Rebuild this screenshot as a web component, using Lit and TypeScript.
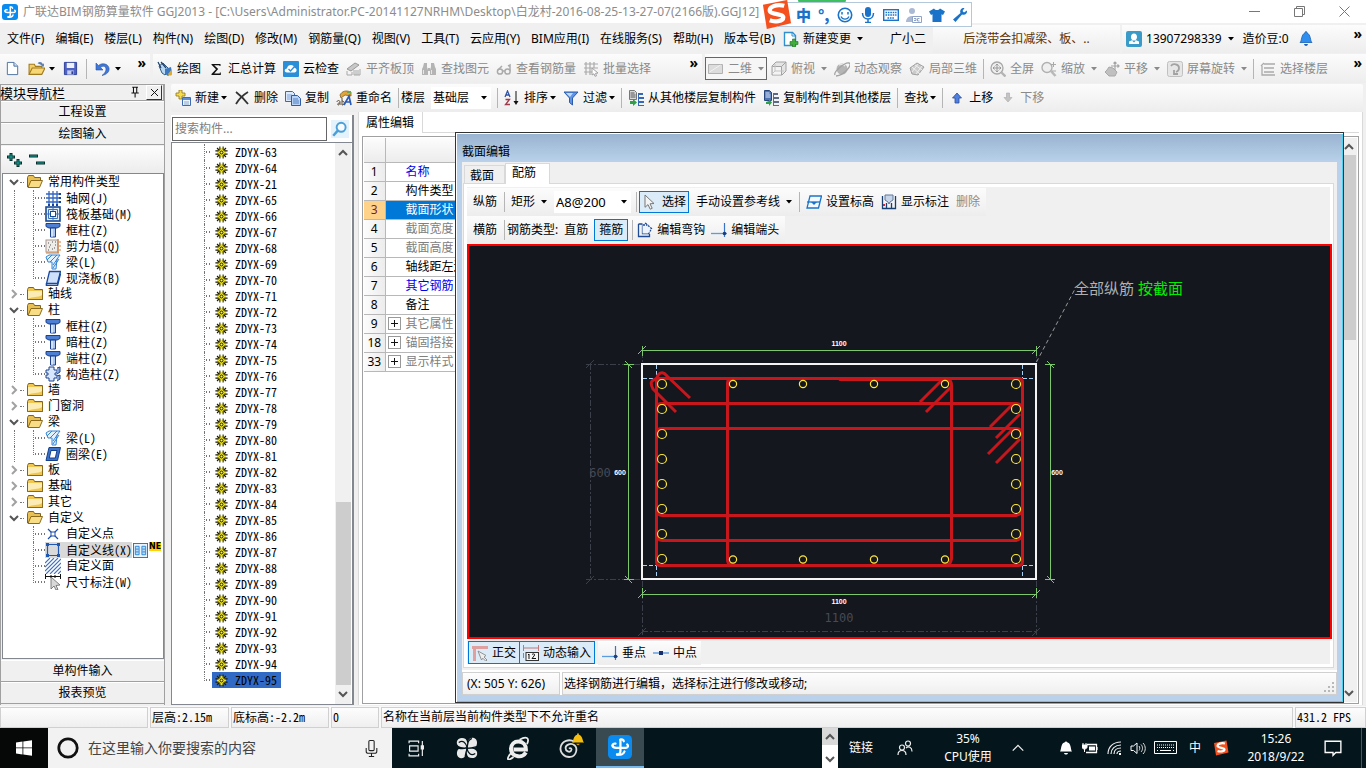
import { LitElement, html, svg, css, nothing } from "lit";
import { customElement } from "lit/decorators.js";
import { classMap } from "lit/directives/class-map.js";

/* ---------- icon set (16 x 16 grid) ---------- */
const icons: Record<string, unknown> = {
  app: svg`<rect width="16" height="16" rx="3" fill="#0a8bf0"/><g fill="none" stroke="#fff" stroke-width="1.500" stroke-linecap="round"><path d="M8.300 3v7.500c0 2-1 2.500-2.300 2.500"/><path d="M8.300 3.200c1.200-.6 2.200 0 2.200 1"/><path d="M3 7c0 1.500 1.500 1.500 2.500 1.500h6.500c1.500 0 1.700-1.500.8-2.200"/><path d="M3 7c0-1 1-1.500 2-1.200"/><path d="M6 13c2.500.5 4.500-.5 5-2"/></g>`,
  fresh: svg`<path d="M2.500 1.500h7l4 4v9h-11z" fill="#fdfeff" stroke="#4a6ea0"/><path d="M9.500 1.500v4h4" fill="#cfdff2" stroke="#4a6ea0"/>`,
  open: svg`<path d="M1 13V4h5l1 2h6v2" fill="#f3cf6a" stroke="#a17a1c"/><path d="M1 13.500l3-6h12l-3 6z" fill="#f7d774" stroke="#a17a1c"/><path d="M9 3c2-2 4-1 5 1l1-1v3h-3l1-1" fill="#5a7fb0"/>`,
  save: svg`<path d="M1.500 1.500h13v13h-13z" fill="#4d62c4" stroke="#2c3d96"/><path d="M4 2h8v5.500H4z" fill="#eef1fb"/><path d="M4.500 10h7v4.500h-7z" fill="#c5cdee"/><path d="M9 11h2v3H9z" fill="#2c3d96"/>`,
  undo: svg`<path d="M1 2v7h7L5.600 6.600C8 4 12 5.500 10.800 9.500 10.300 11.400 9 13 7 14.500c5-1 7.700-4 7-7.500C13 2.500 7 1.500 3.500 4.500z" fill="#3f78d8" stroke="#2552a4" stroke-width=".6"/>`,
  paint: svg`<path d="M2 5l4-3 7 7-5 5-3-2z" fill="#b7d7f2" stroke="#35597f"/><path d="M1 1l3 6M4 1l5 6" stroke="#1e3f6b" stroke-width="1.200"/><path d="M8 8l6-2 1 6-4 3-3-2z" fill="#3b78c2"/><path d="M11 13l4-5v5c0 2-3 2-4 0z" fill="#dfa92b"/>`,
  sigma: svg`<path d="M12.500 5V3H3.500v.8L8 8.200 3.500 13v1h9.300v-2.500h-1v1H6.200l4-4.500-4-3.800h5.300v.8z" fill="#111"/>`,
  cloud: svg`<rect width="16" height="16" rx="1" fill="#2b8fd8"/><path d="M4 11.500c-3 0-3-4 0-4C4.500 3 11 3 11.500 7c3 .3 2.500 4.500 0 4.500z" fill="#fff"/><path d="M5.500 8l2 2 4-4.500" fill="none" stroke="#2b8fd8" stroke-width="1.300"/>`,
  slab: svg`<path d="M1 8l8-6 4 2-8 6z" fill="#c8c8c8" stroke="#999"/><path d="M1 10v4h5v-3M8 9v5h6V8M10 9v5M12 9v5" fill="none" stroke="#a8a8a8"/>`,
  bino: svg`<path d="M2 6l1-4h3v4zM10 6V2h3l1 4zM1 14V8l1-2h4l1 3v5zM9 14V9l1-3h4l1 2v6zM7 7h2v3H7z" fill="#b4b4b4"/><path d="M2.500 9v4M10.500 9v4" stroke="#e6e6e6"/>`,
  glasses: svg`<g fill="none" stroke="#aaa" stroke-width="1.500"><circle cx="4" cy="10.500" r="2.600"/><circle cx="11.500" cy="10.500" r="2.600"/><path d="M6.500 10h2.400M2 9l4-4M14 10V4l-2 1"/></g>`,
  batch: svg`<path d="M1 3h14M1 7h14M1 11h8M3 1v13M7 1v13M11 1v6" stroke="#aaa" fill="none" stroke-width="1.200"/><path d="M9 7l6 5-2.500.3 1 2.500-1.500.5-1-2.500L9 14z" fill="#fff" stroke="#a0a0a0"/>`,
  plane: svg`<path d="M.5 3.500h14v9H.5z" fill="#dcdcdc" stroke="#b2b2b2"/><path d="M1.500 11l11-7" stroke="#f2f2f2"/>`,
  cube: svg`<path d="M1 5l4-4h10v9l-4 4H1z" fill="#e4e4e4" stroke="#a2a2a2"/><path d="M1.500 5.500h9V14M10.500 5.500L15 1" fill="none" stroke="#a2a2a2"/><path d="M2 6h8v7.500H2z" fill="#f4f4f4"/><path d="M4 3v7h9M4 10l-3 3" stroke="#c4c4c4" fill="none"/>`,
  orbit: svg`<circle cx="8" cy="8" r="5.500" fill="#b5b5b5"/><path d="M5 4c2-1 4-1 6 1" stroke="#e5e5e5" fill="none" stroke-width="1.500"/><path d="M1 14C-1 11 11 1 15 2s-4 12-13 13" fill="none" stroke="#a3a3a3" stroke-width="1.300"/>`,
  part3d: svg`<path d="M1 7l7-5 7 4-6 8-6-1z" fill="#cbcbcb" stroke="#a0a0a0"/><path d="M3 6l8 7M6 4l7 5M3 11l6-8M7 13l6-8" stroke="#efefef"/>`,
  full: svg`<circle cx="7" cy="7" r="6" fill="#efefef" stroke="#a8a8a8" stroke-width="1.300"/><path d="M7 3v8M3 7h8M5.500 4.500L7 3l1.500 1.500M5.500 9.500L7 11l1.500-1.500M4.500 5.500L3 7l1.500 1.500M9.500 5.500L11 7 9.500 8.500" fill="none" stroke="#999"/><path d="M11.500 11.500l4 4" stroke="#b4b4b4" stroke-width="2.400"/>`,
  zoom: svg`<circle cx="6" cy="6.500" r="5" fill="#efefef" stroke="#b0b0b0" stroke-width="1.400"/><path d="M10 10l4.500 5" stroke="#b9b9b9" stroke-width="2.600"/><path d="M12.500 1v5M10 3.500h5M11 10h4" stroke="#aaa"/>`,
  pan: svg`<path d="M3 9l2-3 4 1 4 4-2 4H5L1 11z" fill="#c0c0c0" stroke="#a8a8a8"/><path d="M11 1v8M7 5h8M9.500 2.500L11 1l1.500 1.500M13.500 3.500L15 5l-1.500 1.500" fill="none" stroke="#a4a4a4" stroke-width="1.200"/>`,
  rotate: svg`<rect x=".5" y=".5" width="15" height="15" rx="2" fill="#e6e6e6" stroke="#c0c0c0"/><path d="M4 5c2-3 8-2 8 2 0 3-3 4-3 4M7 9v4h4" fill="none" stroke="#a2a2a2" stroke-width="1.800"/>`,
  floor: svg`<path d="M4 3h11M4 7h10M4 11h10M4 14h11M1 5l3-3M2 5v9h2" stroke="#aaa" stroke-width="1.300" fill="none"/>`,
  create: svg`<path d="M4 0h3v3h3v3H7v3H4V6H1V3h3z" fill="#f7dc4a" stroke="#8f7410" stroke-width=".8"/><path d="M7.500 7.500h8v8h-8z" fill="#eef5fd" stroke="#3e6cb0"/><path d="M8 8h7v2H8z" fill="#5d8fd8"/><path d="M9 12h5M9 14h5" stroke="#8aa7cf"/>`,
  cross: svg`<path d="M2 2c4 3 8 7 12 12M14 2C9 5 5 9 2 14" stroke="#333" stroke-width="1.800" fill="none"/>`,
  copy: svg`<path d="M.5 1.500h7l2 2v8h-9z" fill="#dbe9fb" stroke="#3c69ae"/><path d="M2 5h5M2 7h5M2 9h5" stroke="#7ea3d8"/><path d="M6.500 5.500h6l3 3v7h-9z" fill="#b9d3f6" stroke="#2f5ca5"/><path d="M8 9h5M8 11h6M8 13h6" stroke="#4f7fc4"/>`,
  rename: svg`<path d="M4 5c2-4 6-5 11-3v4L9 5 5 8z" fill="#e0a63a" stroke="#80602a" stroke-width=".8"/><path d="M11 1h4v2h-4z" fill="#6aa84f"/><path d="M1 12c0-2 3-2 3 0v3M4 13c-3 0-3 2-1 2M6 8v7c3 0 3-4 0-4" fill="none" stroke="#5b4a34"/><path d="M8 15l5-9 2 9M10 12h4" fill="none" stroke="#2c5bb5" stroke-width="1.700"/>`,
  sort: svg`<path d="M1 7l2.500-6L6 7M2 5h3" fill="none" stroke="#3355a8" stroke-width="1.300"/><path d="M1.500 9.500h4l-4 5h4.500" fill="none" stroke="#a13a4a" stroke-width="1.300"/><path d="M12 1v11" stroke="#111"/><path d="M9.500 11h5L12 15z" fill="#111"/>`,
  filter: svg`<path d="M1 2h14L9.500 8v7l-3-2.500V8z" fill="#5f93e6" stroke="#2b5aa8"/><path d="M3 3h7L7 7z" fill="#c3daf8"/>`,
  floors: svg`<path d="M1.500.5h5l2 2v7h-7z" fill="#d9d9d9" stroke="#777"/><path d="M2.500 3h4M2.500 5h5M2.500 7h5" stroke="#555"/><path d="M10 3h5v2h-4v2h5v2h-5v2h5v2h-5v2h5v1h-6z" fill="#3568b8"/><path d="M2 11h3V9l4 3.500L5 16v-2H2z" fill="#2fa04a"/>`,
  floors2: svg`<path d="M1.500.5h5l2 2v8h-7z" fill="#4f74b4" stroke="#27467e"/><path d="M2.500 3h4M2.500 5h5M2.500 7h5" stroke="#dfe8f8"/><path d="M10 3h5v2h-4v2h5v2h-5v2h5v2h-5v2h5v1h-6z" fill="#5a6a88"/><path d="M3 12l3-1v-2l3 3.500L6 16v-2H3z" fill="#2fa04a"/>`,
  up: svg`<path d="M8 3l4.500 5H10v5H6V8H3.500z" fill="#4f80e0" stroke="#2a4c9c" stroke-width=".8"/>`,
  down: svg`<path d="M8 12l4-4.500H9.500V3h-3v4.500H4z" fill="#c4c4c4" stroke="#aaa" stroke-width=".6"/>`,
  change: svg`<path d="M1.500 1.500h8l3 3v10h-11z" fill="#fff" stroke="#2f8fd0" stroke-width="1.400"/><path d="M9 1.500V5h3.500" fill="none" stroke="#2f8fd0"/><path d="M9.500 8h3v2.500H15v3h-2.500V16h-3v-2.500H7v-3h2.500z" fill="#3fae3a" stroke="#23701f" stroke-width=".6"/>`,
  user: svg`<rect width="16" height="16" rx="2" fill="#3a9bc8"/><path d="M8 2.500c4 0 3.500 6 1.500 6.500l3.500 1.500V13H3v-2.500L6.500 9C4.500 8.500 4 2.500 8 2.500z" fill="#fff"/><path d="M6 9.500l2 2 2-2z" fill="#3a9bc8"/>`,
  bell: svg`<path d="M2 11.500c2-1.500 1-8 5-9.500 0-2 2-2 2 0 4 1.500 3 8 5 9.500z" fill="#2f8ff0" stroke="#1b5fb0" stroke-width=".8"/><path d="M6 13c.5 2.500 3.500 2.500 4 0z" fill="#1b5fb0"/>`,
  search: svg`<path d="M0 0h16v16H0z" fill="#e4f2fc"/><circle cx="9" cy="6.500" r="4" fill="#f6fbff" stroke="#4a9fd8" stroke-width="1.700"/><path d="M6 9.500L2 14" stroke="#4a9fd8" stroke-width="2.200"/>`,
  folder: svg`<path d="M.5 3.500l1-2h5l1 2h8v10H.5z" fill="#f0c650" stroke="#7f6420"/><path d="M1 5h14v4c-4 3-9 1-14 4z" fill="#fbebb4"/><path d="M.5 13.500h15v-9" fill="none" stroke="#8a6a1e"/>`,
  folderOpen: svg`<path d="M.5 13V3.500l1-2h5l1 2h6V7" fill="#e8bf52" stroke="#7f6420"/><path d="M1 13.500l3-7h11.500l-3 7z" fill="#f9dd85" stroke="#8a6a1e"/>`,
  axis: svg`<path d="M1 4h13M1 8h13M1 12h13M4 1v14M8 1v14M12 1v14" stroke="#3467c0" stroke-width="1.300"/><path d="M14 3h2v2h-2zM14 7h2v2h-2zM14 11h2v2h-2zM3 14h2v2H3zM7 14h2v2H7zM11 14h2v2h-2z" fill="#16429a"/>`,
  raft: svg`<rect x="1" y="1" width="14" height="14" fill="#e3eefb" stroke="#174a94" stroke-width="1.600"/><rect x="5.500" y="5.500" width="5" height="5" fill="#fff" stroke="#174a94"/><path d="M3.500 3.500h9v9h-9zM1 8h4M11 8h4M8 1v4M8 11v4" fill="none" stroke="#3f72b8"/>`,
  column: svg`<path d="M1 1.500h14v3l-3 1.500H4L1 4.500z" fill="#4d7fd2" stroke="#1d418c"/><path d="M5.500 6h5v9h-5z" fill="#a9c8f6" stroke="#1d418c"/><path d="M7 7v8" stroke="#fff"/>`,
  wall: svg`<rect x="1" y="2" width="12" height="12" fill="#efedea" stroke="#a89890"/><path d="M3 5h1M7 4h1M10 7h1M4 9h1M7 11h1M5 7h1M9 10h1M3 12h1M10 4h1" stroke="#555"/><path d="M13 1v14M14 4h2M14 8h2M14 12h2M1 15h13" stroke="#d07c3c" stroke-width="1.200"/>`,
  beam: svg`<path d="M1 3l3-2h11l-3 4-1 10H7V8L3 8z" fill="#e4f1fd" stroke="#3583d0"/><path d="M2 6l5-5M5 8l7-7M8 11l5-7M8 14l6-9" stroke="#3583d0"/>`,
  board: svg`<path d="M4.500 1.500h11l-3 12h-11z" fill="#cfe0fa" stroke="#174aa0" stroke-width="1.300"/><path d="M1.500 13.500v2h11l3-12" fill="none" stroke="#174aa0" stroke-width="1.500"/>`,
  ring: svg`<path d="M4 1.500h11.500l-3 13H1z" fill="#3c72c8" stroke="#15408c"/><path d="M6 4.500h6l-1.700 7.500H4.300z" fill="#fff" stroke="#15408c"/>`,
  struct: svg`<path d="M4 1h5v3h3v3h-2v2h2v3H9v3H4v-3H1V9h2V7H1V4h3z" fill="#d8e7fb" stroke="#1d4590"/><path d="M12 2l3-1v5l-3 2M12 10l3-1v4l-3 2" fill="#88a8dc" stroke="#1d4590"/>`,
  point: svg`<path d="M3 3l10 10M13 3L3 13" stroke="#1d4fae" stroke-width="1.200"/><path d="M6 6h4v4H6z" fill="#fff" stroke="#1d4fae"/>`,
  line: svg`<path d="M2.500 2.500h11v11h-11z" fill="none" stroke="#1f57b4" stroke-width="1.200"/><path d="M1 1h3v3H1zM12 1h3v3h-3zM1 12h3v3H1zM12 12h3v3h-3z" fill="#1f57b4"/>`,
  face: svg`<path d="M0 5l5-5M0 9l9-9M0 13l13-13M1 16L16 1M5 16L16 5M9 16l7-7M13 16l3-3" stroke="#3f70c0" stroke-width="1.100"/>`,
  dimension: svg`<path d="M.5 0v5M15.500 0v5M1 2.500h14M6 1v3M10 1v3" stroke="#111"/><path d="M6 3l9 8-4 .5 2 4-2 .5-2-4-3 3z" fill="#d9d9d9" stroke="#666" stroke-width=".8"/>`,
  gear: svg`<circle cx="8" cy="8" r="5.500" fill="#efe62a"/><path d="M6 .5v4M10 .5v4M6 11.500v4M10 11.500v4M.5 6h4M.5 10h4M11.500 6h4M11.500 10h4" stroke="#1c1a00" stroke-width="1.300"/><path d="M2.500 2.500l3 3M13.500 2.500l-3 3M2.500 13.500l3-3M13.500 13.500l-3-3" stroke="#1c1a00" stroke-width="1.500"/><circle cx="8" cy="8" r="1.800" fill="#f6ef60" stroke="#1c1a00" stroke-width="1.200"/>`,
  book: svg`<rect x=".5" y=".5" width="15" height="15" fill="#eaf4fd" stroke="#2c6fb8"/><path d="M2.500 3.500h4v9h-4zM9.500 3.500h4v9h-4zM3 6.500h3M3 9.500h3M10 6.500h3M10 9.500h3" fill="#bcdcf8" stroke="#2a86d8"/>`,
  cursor: svg`<path d="M3 1l9 8.500-4 .3 2.200 4.500-2 .9L6 10.600 3 13.300z" fill="#f4f4f4" stroke="#777"/>`,
  level: svg`<path d="M4 2h11.500l-3 12H1z" fill="#f4f9ff" stroke="#1b74c8" stroke-width="1.300"/><path d="M1 8h13" stroke="#1b74c8" stroke-width="1.300"/><path d="M5 8h6l-3 3z" fill="#1b74c8"/>`,
  showDim: svg`<path d="M1.500 2v12.500h13V2M5.500 9v5M10.500 9v5" fill="none" stroke="#173f70" stroke-width="1.300"/><path d="M4 1h8v5l-3 2-1 2-1-2-3-2z" fill="#c7d5ea" stroke="#5f7698"/><path d="M2 10h2v2H2z" fill="#d23"/>`,
  hook: svg`<path d="M1.500 2v12.500h11v-2.500M1.500 2h4M5.500 2.500v9H12" fill="none" stroke="#1f4a94" stroke-width="1.300"/><path d="M5.500 2.500H10l4 4-3 5H5.500z" fill="#eef4ff"/><path d="M8 1l3 2M11 3.500l3.500 3L12 11.500M6 3h4" fill="none" stroke="#1f4a94" stroke-width="1.300" stroke-dasharray="2 1"/>`,
  perp: svg`<path d="M0 11.500h16" stroke="#5b9be0" stroke-width="1.300"/><path d="M13.500 1v14" stroke="#3873c8" stroke-width="1.200"/><circle cx="13.500" cy="11.500" r="1.800" fill="#173f86"/>`,
  mid: svg`<path d="M0 8h16" stroke="#5b9be0" stroke-width="1.400"/><path d="M6 6h4v4H6z" fill="#16306e"/>`,
  ortho: svg`<path d="M0 1h16v3H4v12H1V4H0z" fill="#e0a0a0"/><path d="M6 6l8 4.500-2 1.500 3 3-1.200 1.200-3-3L9.500 15z" fill="#eee" stroke="#888" stroke-width=".9"/>`,
  dyn: svg`<path d="M.5 0v6M15.500 0v6M1 3h14" stroke="#c07878"/><path d="M.5 8v5" stroke="#888"/><rect x="3" y="7.500" width="12.500" height="8" fill="#f6f6f6" stroke="#333"/><path d="M5 10l1-1v5M9 9.500c2-1.500 3.500 0 2 1.500l-2 2.500h4" fill="none" stroke="#111"/>`,
  pin: svg`<path d="M4 1.500h7M5.500 2v6M9.500 2v6M3 8.500h9M7.500 9v5" stroke="#111" stroke-width="1.300" fill="none"/>`,
  expandAll: svg`<path d="M4 1v8M0 5h8M11 7v8M7 11h8" stroke="#05302d" stroke-width="3"/><path d="M4 2v6M1 5h6M11 8v6M8 11h6" stroke="#19a59b"/>`,
  collapseAll: svg`<path d="M0 4h9M7 11h9" stroke="#05302d" stroke-width="3"/><path d="M1 4h7M8 11h7" stroke="#19a59b"/>`,
  win: svg`<path d="M0 2.400L6.500 1.500v6H0zM7.300 1.400L16 .2v7.300H7.300zM0 8.300h6.500v6.200L0 13.600zM7.300 8.300H16v7.500l-8.700-1.200z" fill="#fff"/>`,
  ringO: svg`<circle cx="8" cy="8" r="6.700" fill="none" stroke="#111" stroke-width="2"/>`,
  mic: svg`<rect x="5.500" y=".5" width="5" height="9.500" rx="1" fill="none" stroke="#222"/><path d="M3 7.500v3c0 1.500 1 2 2 2h6c1 0 2-.5 2-2v-3M8 12.500V15M5.500 15.500h5" fill="none" stroke="#222"/>`,
  task: svg`<path d="M1 3V1h9v2M1 13v2h9v-2M1.500 5.500h8v5h-8zM13.500 1v14M12.500 5.500h2v3h-2z" fill="none" stroke="#eee" stroke-width="1.100"/>`,
  flower: svg`<g fill="#e9e9e9"><path d="M8 7.500C3 8 .2 6.500.6 3.500 1 .5 5 0 7 1.500c1.500 1.500 1 3.500 1 6z"/><path d="M8.500 8C8 3 9.500.2 12.500.6c3 .4 3.500 4.400 2 6.400-1.500 1.500-3.500 1-6 1z"/><path d="M8 8.500c5-.5 7.800 1 7.400 4-.4 3-4.400 3.500-6.400 2-1.500-1.500-1-3.500-1-6z"/><path d="M7.500 8C8 13 6.500 15.800 3.500 15.400.5 15 0 11 1.500 9c1.500-1.500 3.500-1 6-1z"/></g><path d="M2 4c3-2 5.500 0 6 4 1-4 0-5 3.500-7M14 12c-3 2-5.500 0-6-4-4 1-5 0-7 .5M8 8c4 .5 5-1 7.500-1M8 8c-.5 4-2 5-1 7.500" fill="none" stroke="#04151b" stroke-width=".9"/>`,
  ie: svg`<path d="M13.300 11C12 13 10 13.800 8 13.500 5 13 3.300 11 3.300 8.500 3.500 5.500 5.500 3.700 8.300 3.700c3 0 5 2.300 5 5.300H5" fill="none" stroke="#eee" stroke-width="2.600"/><path d="M4 10.500C-.5 16 1 17 5 14M9 2.500c4.500-2.500 7-1.500 5 3" fill="none" stroke="#eee" stroke-width="1.200"/>`,
  swirl: svg`<path d="M8 8.500c1-1 2.500 0 1.500 1.500s-4 .5-4-2 4-4 6.500-2 1.500 8-3 8.500S1 11 2 7s6-6 10-3.500" fill="none" stroke="#ddd" stroke-width="1.300"/>`,
  goldBell: svg`<path d="M1 12c2-1.500 1.500-8 6-9 0-2 2-2 2 0 4.500 1 4 7.500 6 9z" fill="#f4bd10"/><path d="M6 13.500h4c-.5 2-3.500 2-4 0z" fill="#d99a00"/>`,
  people: svg`<g fill="none" stroke="#eee" stroke-width="1.200"><circle cx="5" cy="7.500" r="2.500"/><path d="M1 15c0-6 8-6 8 0"/><circle cx="11" cy="3.500" r="2.500"/><path d="M9 8c2.500-2 6-1 6 3.500"/></g>`,
  chevUp: svg`<path d="M2 11l6-6 6 6" fill="none" stroke="#eee" stroke-width="1.500"/>`,
  notify: svg`<path d="M2 11.500c1.500-1.500.5-8 4.500-9 .5-1.500 2.500-1.500 3 0 4 1 3 7.500 4.500 9z" fill="#fff"/><path d="M6 13h4c-.5 2-3.500 2-4 0z" fill="#fff"/>`,
  battery: svg`<path d="M5 4.500h9.500v8H4M15 7v3" fill="none" stroke="#fff" stroke-width="1.300"/><path d="M7 6.500h6v4H7z" fill="#fff"/><path d="M0 5h5v2c0 1-1 2-2.500 2S0 8 0 7zM1 3v2M4 3v2M2.500 9v3" stroke="#fff" fill="#fff"/>`,
  wifi: svg`<g fill="none" stroke="#eee" stroke-width="1.200"><path d="M2 14C2 7 7 2 15 2"/><path d="M5 14c0-5 4-9 10-9"/><path d="M8 14c0-4 3-6 7-6"/><path d="M11 14c0-2 2-3 4-3"/></g><path d="M13 13h2v2h-2z" fill="#fff"/>`,
  volume: svg`<path d="M1 6h2.500L7 3v10.500L3.500 10.500H1z" fill="none" stroke="#fff"/><path d="M9 6c1 1 1 3.500 0 4.500M11 4.500c2 2 2 5.500 0 7.500M13 3c3 3 3 8 0 11" fill="none" stroke="#ddd"/>`,
  sogou: svg`<path d="M1 3l12.500-2.500 2 12L3 15.500z" fill="#f4511e"/><path d="M12 3.500C8 2.500 4.500 4 4.500 5.800c0 2.500 7 1.500 7 3.700 0 2-4.500 2.500-7 1.500" fill="none" stroke="#fff" stroke-width="2.200"/>`,
  action: svg`<path d="M1 2h14v10h-4.500L8 14.500V12H1z" fill="none" stroke="#fff" stroke-width="1.200"/>`,
  smile: svg`<circle cx="8" cy="8" r="6.700" fill="none" stroke="#1a73c8" stroke-width="1.600"/><path d="M5 5v2.500M11 5v2.500" stroke="#1a73c8" stroke-width="1.500"/><path d="M4 9.500c1.500 3.500 6.500 3.500 8 0" fill="none" stroke="#1a73c8" stroke-width="1.300"/>`,
  mic2: svg`<rect x="5" y="0" width="6" height="10" rx="3" fill="#1a73c8"/><path d="M2.500 6c0 8 11 8 11 0M8 12v3M5 15.500h6" fill="none" stroke="#1a73c8" stroke-width="1.500"/>`,
  keys: svg`<rect x=".7" y="2.700" width="14.600" height="10.600" fill="none" stroke="#1a73c8" stroke-width="1.400"/><path d="M2.500 5.500h11M2.500 8h11M4.500 11h7" stroke="#1a73c8" stroke-width="1.300" stroke-dasharray="1.600 .8"/>`,
  person: svg`<circle cx="6" cy="4" r="3" fill="#aab9d4"/><path d="M0 15c0-8 12-8 12 0z" fill="#aab9d4"/><path d="M6.500 9.500h9v6h-9z" fill="#fff" stroke="#8ea2c8"/><path d="M8 11.500h2v2H8M13.500 11.500h-2v2.500h2" fill="none" stroke="#8ea2c8"/>`,
  shirt: svg`<path d="M5 1.500c1.500 2 4.500 2 6 0L16 4.500l-2 3.500-1.500-.8V15h-9V7.200L2 8 0 4.500z" fill="#1a73c8"/>`,
  wrench: svg`<path d="M15 3.500l-3 2-1.500-1.500 2-3C9 .5 7.500 3.500 8.500 6L1 12.500 3.500 15 10 7.500c3 1 5.500-.8 5-4z" fill="#1a73c8"/>`,
};
const ico = (n: string, s = 16, label = "") =>
  html`<svg class="ico" width=${s} height=${s} viewBox="0 0 16 16" role="img" aria-label=${label || nothing}>${icons[n]}</svg>`;
const caret = () => html`<svg class="caret" width="6" height="4" viewBox="0 0 6 4" aria-hidden="true"><path d="M0 0h6L3 3.500z" fill="currentColor"/></svg>`;
const chevron = (d: string) => html`<svg class="chev" width="10" height="10" viewBox="0 0 10 10" aria-hidden="true"><path d=${d} fill="none" stroke="#555" stroke-width="2"/></svg>`;
const UP = "M1 7l4-4 4 4", DOWN = "M1 3l4 4 4-4", RIGHT = "M3 1l4 4-4 4";
/* Latin runs use the half-width forms of the CJK face. */
const mix = (s: string) => s.split(/([\x20-\x7e]+)/).filter(Boolean)
  .map((p) => (/^[\x20-\x7e]/.test(p) ? html`<span class="half">${p}</span>` : p));

const shared = css`
  :host { font: 12px/16px "Noto Sans", "Noto Sans CJK SC", sans-serif; color: #000; }
  * { box-sizing: border-box; }
  button, input, select { font: inherit; color: inherit; margin: 0; padding: 0; border: 0; border-radius: 0; background: none; outline: 0; }
  button { display: inline-flex; align-items: center; white-space: nowrap; flex: none; }
  select { appearance: none; }
  .ico, .caret, .chev { flex: none; display: block; }
  .half { font-family: "Noto Sans CJK SC", "Liberation Mono", monospace; font-feature-settings: "hwid"; white-space: pre; }
  .tb { gap: 4px; height: 22px; }
  .tb .caret { margin-left: 2px; }
  .dim { color: #8a8a8a; }
  .sep { width: 1px; height: 20px; background: #b5b5b5; flex: none; }
  .band { display: flex; align-items: center; gap: 7px; background: linear-gradient(#fcfcfc, #ededed); white-space: nowrap; overflow: hidden; }
  .pick { display: flex; align-items: center; background: #fff; position: relative; }
  .pick .caret { position: absolute; right: 4px; pointer-events: none; }
  .pick select { width: 100%; height: 22px; padding-left: 2px; }
  .scroll { width: 16px; flex: none; background: #f0f0f0; display: flex; flex-direction: column; align-items: center; justify-content: space-between; padding: 4px 0; }
`;

type Tool = [icon: string, label: string, opts?: string];
const tool = ([i, label, o = ""]: Tool) => label === "|" ? html`<span class="sep"></span>` : html`
  <button class=${classMap({ tb: true, dim: o.includes("d"), on: o.includes("s") })}>${i ? ico(i) : nothing}<span>${label}</span>${o.includes("c") ? caret() : nothing}</button>`;

/* ---------- left navigation ---------- */
type Node = [depth: number, icon: string, text: string, state?: string];
const NODES: Node[] = [
  [0, "folderOpen", "常用构件类型", "open"], [1, "axis", "轴网(J)"], [1, "raft", "筏板基础(M)"], [1, "column", "框柱(Z)"],
  [1, "wall", "剪力墙(Q)"], [1, "beam", "梁(L)"], [1, "board", "现浇板(B)", "last"], [0, "folder", "轴线"],
  [0, "folderOpen", "柱", "open"], [1, "column", "框柱(Z)"], [1, "column", "暗柱(Z)"], [1, "column", "端柱(Z)"], [1, "struct", "构造柱(Z)", "last"],
  [0, "folder", "墙"], [0, "folder", "门窗洞"], [0, "folderOpen", "梁", "open"], [1, "beam", "梁(L)"], [1, "ring", "圈梁(E)", "last"],
  [0, "folder", "板"], [0, "folder", "基础"], [0, "folder", "其它"], [0, "folderOpen", "自定义", "open"],
  [1, "point", "自定义点"], [1, "line", "自定义线(X)", "hot"], [1, "face", "自定义面"], [1, "dimension", "尺寸标注(W)", "last"],
];
const LAST_ROOT = NODES.map(([d]) => d).lastIndexOf(0);

@customElement("module-nav")
class ModuleNav extends LitElement {
  static styles = [shared, css`
    :host { display: flex; flex-direction: column; width: 165px; flex: none; background: #f0f0f0; border-right: 1px solid #a0a0a0; border-left: 1px solid #a0a0a0; padding-bottom: 1px; }
    header { display: flex; align-items: center; height: 17px; border: 1px solid #a0a0a0; border-left: 0; font-size: 13px; padding-right: 1px; }
    header span { flex: 1; margin-left: -1px; }
    header .x { width: 16px; height: 15px; justify-content: center; border: 1px solid #333; border-top-color: #fff; border-left-color: #fff; margin-left: 4px; }
    .sect { height: 22px; justify-content: center; border-bottom: 1px solid #a0a0a0; border-top: 1px solid #fff; }
    .tools { display: flex; align-items: center; gap: 6px; height: 27px; padding-left: 6px; background: linear-gradient(#fdfdfd, #ececec); margin-top: 1px; }
    .tree { flex: 1; min-height: 0; overflow: hidden; background: #fff; border: 1px solid #828790; margin: 0 0 1px 1px; }
    .node { display: flex; align-items: center; height: 16px; padding-left: 6px; white-space: nowrap; }
    .node .lead { width: 4px; height: 1px; flex: none; border-top: 1px dotted #777; margin-left: 1px; }
    .node .ico { margin: 0 5px 0 3px; }
    .closed .chev { opacity: .55; }
    .child { padding-left: 0; }
    .rail { width: 12px; height: 16px; border-right: 1px dotted #777; flex: none; }
    .bare { border-right-color: transparent; }
    .branch { width: 12px; height: 16px; margin-left: 18px; flex: none; background: radial-gradient(circle, #777 0 1px, transparent 1px) 0 7px / 3px 2px repeat-x; border-left: 1px dotted #777; }
    .end .branch { height: 9px; align-self: flex-start; }
    .leaf { height: 16px; display: flex; align-items: center; flex: none; }
    .leaf .ico { margin: 0 5px 0 0; }
    .hot .leaf { background: #d9d9d9; }
    .node .book { display: flex; }
    .node .book .ico { margin: 0 1px; }
    .new { background: #ffd400; font: bold 8px/9px "DejaVu Sans", sans-serif; align-self: flex-start; }
  `];
  render() {
    return html`
      <header><span>模块导航栏</span>${ico("pin", 13)}<button class="x" aria-label="关闭"><svg width="9" height="9" viewBox="0 0 9 9"><path d="M1 1l7 7M8 1L1 8" stroke="#111"/></svg></button></header>
      <button class="sect">工程设置</button><button class="sect">绘图输入</button>
      <div class="tools"><button aria-label="展开">${ico("expandAll")}</button><button aria-label="折叠">${ico("collapseAll")}</button></div>
      <div class="tree" role="tree">${NODES.map(([d, i, t, s = ""], k) => d === 0
        ? html`<div role="treeitem" class="node ${s ? "" : "closed"}">${chevron(s ? DOWN : RIGHT)}<span class="lead"></span>${ico(i)}<span>${mix(t)}</span></div>`
        : html`<div role="treeitem" class="node child ${s === "last" ? "end" : s}"><span class="rail ${k > LAST_ROOT ? "bare" : ""}"></span><span class="branch"></span><span class="leaf">${ico(i)}<span>${mix(t)}</span></span>
          ${s === "hot" ? html`<span class="book">${ico("book", 15)}</span><span class="new">NE</span>` : nothing}</div>`)}</div>
      <button class="sect">单构件输入</button><button class="sect">报表预览</button>`;
  }
}

/* ---------- component list ---------- */
const NUMS = [63, 64, 21, ...Array.from({ length: 31 }, (_, k) => 65 + k)];
@customElement("component-list")
class ComponentList extends LitElement {
  static styles = [shared, css`
    :host { display: flex; flex-direction: column; width: 183px; flex: none; background: #fff; border-right: 2px solid #828790; }
    .find { display: flex; align-items: center; gap: 4px; height: 27px; padding-left: 1px; }
    .find input { flex: 1; min-width: 0; height: 24px; border: 1px solid #666; padding-left: 2px; line-height: 20px; }
    .find input::placeholder { color: #808080; opacity: 1; }
    .find button { width: 20px; margin-right: 1px; }
    .box { flex: 1; display: flex; min-height: 0; border: 1px solid #828790; border-right: 0; }
    .rows { flex: 1; overflow: hidden; padding-top: 1px; }
    .row { display: flex; align-items: center; height: 16px; }
    .dots { margin-left: 32px; width: 8px; height: 16px; flex: none; border-left: 1px dotted #777; background: radial-gradient(circle, #777 0 1px, transparent 1px) 0 7px / 3px 2px repeat-x; }
    .row:last-child .dots { height: 9px; align-self: flex-start; }
    .row button { height: 16px; padding: 0 4px 0 3px; gap: 7px; }
    .row .ico { width: 13px; }
    .sel { background: #316ac5; }
    .scroll { margin-right: 1px; padding: 5px 0; position: relative; }
    .thumb { position: absolute; left: 1px; right: 0; top: 64%; bottom: 19px; background: #cdcdcd; }
  `];
  render() {
    return html`
      <div class="find"><input type="text" aria-label="搜索构件" placeholder="搜索构件..."><button aria-label="搜索">${ico("search", 18)}</button></div>
      <div class="box"><div class="rows">${NUMS.map((n) => html`<div class="row"><span class="dots"></span><button class=${n === 95 ? "sel" : ""}>${ico("gear", 13)}<span class="half">ZDYX-${n}</span></button></div>`)}</div>
      <div class="scroll">${chevron(UP)}<span class="thumb"></span>${chevron(DOWN)}</div></div>`;
  }
}

/* ---------- property editor ---------- */
const PROPS: [string, string, string][] = [["1", "名称", "blue"], ["2", "构件类型", ""], ["3", "截面形状", "cur"], ["4", "截面宽度", "dim"], ["5", "截面高度", "dim"],
  ["6", "轴线距左边", ""], ["7", "其它钢筋", "blue"], ["8", "备注", ""], ["9", "其它属性", "dim plus"], ["18", "锚固搭接", "dim plus"], ["33", "显示样式", "dim plus"]];
@customElement("property-editor")
class PropertyEditor extends LitElement {
  static styles = [shared, css`
    :host { display: flex; flex-direction: column; flex: 1; min-width: 0; background: #fff; border-left: 1px solid #d9d9d9; border-right: 1px solid #d9d9d9; padding: 0 3px 1px 3px; }
    .tabs { display: flex; height: 21px; border-bottom: 1px solid #d9d9d9; margin-left: -3px; }
    .tabs button { padding: 0 8px 0 7px; height: 21px; background: #fff; border-right: 1px solid #d9d9d9; }
    .grid { flex: 1; display: flex; justify-content: space-between; align-items: stretch; border: 1px solid #a0a0a0; margin-top: 3px; padding: 1px; min-height: 0; }
    table { border-collapse: collapse; width: 400px; table-layout: fixed; align-self: flex-start; }
    th, td { height: 19px; padding: 0; border: 1px solid #b8b8b8; border-left: 0; border-top: 0; font-weight: 400; }
    thead th { height: 24px; background: linear-gradient(#fcfcfc, #ececec); }
    .n { width: 21px; }
    tbody th { text-align: center; background: linear-gradient(90deg, #fcfcfc, #ececec); }
    .cur th { background: #ffd28a; color: #7a1e1e; }
    .cur td { background: #0078d7; color: #fff; }
    .v { display: flex; align-items: center; padding-left: 20px; }
    .blue { color: #0000f0; }
    .dim { color: #000; }
    .dim .v { color: #808080; }
    .plus .v { padding-left: 2px; }
    .box { width: 13px; height: 13px; border: 1px solid #999; margin-right: 5px; flex: none; background: linear-gradient(#111, #111) center / 7px 1px no-repeat, linear-gradient(#111, #111) center / 1px 7px no-repeat; }
    .blue th { color: #000; }
    .scroll { position: relative; }
    .thumb { position: absolute; left: 0; right: 1px; top: 17px; height: 185px; background: #cdcdcd; }
  `];
  render() {
    return html`<div class="tabs"><button>属性编辑</button></div>
      <div class="grid"><table><thead><tr><th class="n"></th><th></th></tr></thead><tbody>${PROPS.map(([n, t, c]) => html`
        <tr class=${c}><th scope="row">${n}</th><td><div class="v">${c.includes("plus") ? html`<span class="box"></span>` : nothing}${t}</div></td></tr>`)}</tbody></table>
      <div class="scroll">${chevron(UP)}<span class="thumb"></span>${chevron(DOWN)}</div></div>`;
  }
}

/* ---------- section editor window ---------- */
const tick = (x: number, y: number) => svg`<path d="M${x - 4} ${y + 4}l8 -8"/>`;
const SIDE_Y = [384, 409, 434, 459, 484, 509, 534, 559];
const MID_X = [733, 803, 874, 945];
const drawing = () => svg`<g transform="translate(-469 -246)" fill="none">
  <g stroke="#3a3f49" stroke-dasharray="6 2 2 2"><path d="M590.500 364v216M586 364.500h55M586 579.500h55M642.500 581v56M1036.500 581v56M642 631.500h395M642.500 352v11M1036.500 352v11"/></g>
  <g stroke="#3a3f49">${tick(590, 364)}${tick(590, 580)}${tick(642, 632)}${tick(1036, 632)}</g>
  <g stroke="#7cc66c"><path d="M642 350.500h395M642.500 346v10M1036.500 346v10M642 594.500h395M642.500 588v10M1036.500 588v10M628.500 364v216M624 364.500h10M624 579.500h10M1050.500 364v216M1045 364.500h10M1045 579.500h10"/>
    ${tick(642, 350)}${tick(1036, 350)}${tick(642, 594)}${tick(1036, 594)}<path d="M625 361l7 7M625 576l7 7M1047 361l7 7M1047 576l7 7"/></g>
  <path d="M1036.500 362L1075 289" stroke="#999" stroke-dasharray="4 3"/>
  <rect x="642" y="364" width="394" height="215" stroke="#f4f4f4" stroke-width="2"/>
  <path d="M643 378.500h14M656.500 365v13M1023 378.500h12M1022.500 365v13M643 565.500h14M656.500 566v12M1023 565.500h12M1022.500 566v12" stroke="#a8d0f4" stroke-dasharray="4 2"/>
  <g stroke="#c8161d" stroke-width="3" stroke-linecap="round" stroke-linejoin="round">
    <path d="M656.500 381V562q0 3.500 4 3.500H1018q4.500 0 4.500-4V382q0-3.500-4-3.500H656"/>
    <path d="M657 407q0-3.500 5-3.500H1016q6 0 6 6M657 432q0-3.500 5-3.500H1016q6 0 6 6M657 511q1 4.500 5 4.500H1016q5-1 6-5M657 536q1 4.500 5 4.500H1016q5-1 6-5"/>
    <path d="M730 379.500q-2.500 0-2.500 4V560q0 4 4 5M840 379.500H948q3.500 1 3.500 6V559q-1 5-4 6"/>
    <path d="M690 398L667 376q-5-6-9-1l-2 6M676 412L653 389q-5-9 4-10M943 379l-23 23M951 387l-25 25M1013 404l-23 23M1020 414l-24 24M1013 429l-25 25M1020 439l-24 24" stroke-linecap="butt"/>
  </g>
  <g stroke="#ffe83a" stroke-width="1.200">${SIDE_Y.map((y) => svg`<circle cx="662" cy=${y} r="4.500"/><circle cx="1016" cy=${y} r="4.500"/>`)}${MID_X.map((x) => svg`<circle cx=${x} cy="384" r="3.600"/><circle cx=${x} cy="559.500" r="3.600"/>`)}</g>
  <g fill="#fff" class="tiny" text-anchor="middle"><text x="839" y="346">1100</text><text x="839" y="604">1100</text><text x="620" y="475">600</text><text x="1057" y="475">600</text></g>
  <g fill="#454a55" class="ghost" text-anchor="middle"><text x="839" y="622">1100</text><text x="600" y="477">600</text></g>
  <text x="1074" y="294" class="note" fill="#b0b0b0">全部纵筋</text><text x="1138" y="294" class="note" fill="#00f000">按截面</text>
</g>`;

@customElement("section-window")
class SectionWindow extends LitElement {
  static styles = [shared, css`
    :host { display: flex; flex-direction: column; background: #b9d1ea; border: 1px solid #333; outline: 0; padding: 0 6px 7px 6px; box-shadow: inset 1px 1px #fff, inset -1px -1px #4fd0ee; }
    h2 { margin: 1px -5px 0 -5px; height: 28px; font: inherit; line-height: 36px; padding-left: 5px; background: linear-gradient(#99b4d1, #b9d1ea); }
    .body { flex: 1; min-height: 0; display: flex; flex-direction: column; background: #f0f0f0; padding: 1px 3px 2px 1px; }
    .tabs { display: flex; align-items: flex-end; height: 21px; padding-left: 1px; position: relative; z-index: 1; margin-bottom: -1px; }
    .tabs button { height: 19px; padding: 2px 10px 0 5px; border: 1px solid #d9d9d9; width: 41px; }
    .tabs .act { height: 21px; background: #fff; border-bottom: 0; padding: 0 10px 2px 6px; width: 45px; }
    .page { flex: 1; min-height: 0; display: flex; flex-direction: column; align-items: stretch; background: #f0f0f0; border: 1px solid #d9d9d9; box-shadow: inset 0 0 0 3px #fff; padding: 4px 1px 2px 3px; }
    .band { align-self: flex-start; }
    .a, .b { height: 28px; padding: 0 6px; }
    .b { height: 27px; margin-bottom: 1px; gap: 6px; }
    .a > .sep { margin-right: -1px; }
    .b > .sep { margin: 0 -2px; }
    .on { border: 1px solid #0078d7; background: #dcebf8; padding: 0 2px; }
    .b .on { padding: 0 4px; }
    .tight { display: flex; align-items: center; gap: 2px; }
    .a .tight { margin-left: -2px; }
    .b .tight { margin-left: 1px; }
    .pick { width: 77px; }
    .a .pick select { font-size: 13px; }
    .canvas { flex: 1; min-height: 0; border: 2px solid #f00; background: #14171e; overflow: hidden; display: flex; }
    .canvas svg { flex: 1; width: 100%; height: 100%; display: block; }
    .tiny { font: bold 7px "Liberation Sans", sans-serif; }
    .ghost { font: 12px "DejaVu Sans Mono", monospace; }
    .note { font: 15px "Noto Sans CJK SC", sans-serif; }
    .foot { display: flex; align-items: center; height: 26px; gap: 3px; padding: 1px 0 0 1px; }
    .foot .band { height: 24px; padding: 0 4px; align-self: center; }
    .foot .on { height: 23px; padding: 0 3px; }
    .snap { display: flex; }
    .snap .on + .on { margin-left: -1px; }
    .status { display: grid; grid-template-columns: 98px 1fr; gap: 2px; height: 25px; padding-top: 2px; background: #fff; }
    .status div { border: 1px solid #d0d0d0; background: linear-gradient(#fdfdfd, #efefef); padding: 3px 0 0 4px; position: relative; white-space: nowrap; }
    .status div + div { padding-left: 1px; }
    .grip { position: absolute; right: 1px; bottom: 1px; }
  `];
  render() {
    return html`
      <h2>截面编辑</h2>
      <div class="body">
        <div class="tabs" role="tablist"><button role="tab">截面</button><button role="tab" class="act" aria-selected="true">配筋</button></div>
        <div class="page">
          <div class="band a">${tool(["", "纵筋"])}${tool(["", "|"])}${tool(["", "矩形", "c"])}
            <label class="pick"><select aria-label="箍筋规格"><option>A8@200</option></select>${caret()}</label>
            <div class="tight">${tool(["", "|"])}${tool(["cursor", "选择", "s"])}</div>${tool(["", "手动设置参考线", "c"])}${tool(["", "|"])}
            ${tool(["level", "设置标高"])}${tool(["showDim", "显示标注"])}${tool(["", "删除", "d"])}</div>
          <div class="band b">${tool(["", "横筋"])}<div class="tight">${tool(["", "|"])}<span>钢筋类型:</span></div>${tool(["", "直筋"])}${tool(["", "箍筋", "s"])}${tool(["", "|"])}
            ${tool(["hook", "编辑弯钩"])}${tool(["perp", "编辑端头"])}</div>
          <div class="canvas"><svg aria-label="截面配筋图" role="img">${drawing()}</svg></div>
          <div class="foot"><div class="snap">${tool(["ortho", "正交", "s"])}${tool(["dyn", "动态输入", "s"])}</div><div class="band">${tool(["perp", "垂点"])}${tool(["mid", "中点"])}</div></div>
        </div>
      </div>
      <div class="status"><div>(X: 505 Y: 626)</div><div>选择钢筋进行编辑，选择标注进行修改或移动;<svg class="grip" width="12" height="12" viewBox="0 0 12 12"><path d="M9 1h2v2H9zM5 5h2v2H5zM9 5h2v2H9zM1 9h2v2H1zM5 9h2v2H5zM9 9h2v2H9z" fill="#b8b8b8"/></svg></div></div>`;
  }
}

/* ---------- taskbar ---------- */
@customElement("task-bar")
class TaskBar extends LitElement {
  static styles = [shared, css`
    :host { display: flex; align-items: stretch; height: 40px; flex: none; background: #04161b; color: #fff; }
    .start { width: 48px; justify-content: center; background: #060808; }
    .search { display: flex; align-items: center; width: 344px; background: #f2f2f2; padding: 0 12px 0 9px; color: #333; gap: 9px; }
    .search input { flex: 1; font-size: 14px; height: 30px; line-height: 30px; }
    .search input::placeholder { color: #444; opacity: 1; }
    .apps { display: flex; flex: 1; }
    .apps button { width: 48px; justify-content: center; margin-right: 3px; position: relative; }
    .apps .badge { position: absolute; right: 8px; top: 4px; }
    .apps .live { background: #3a4a51; border-bottom: 2px solid #76b9ed; }
    .spin { width: 16px; background: linear-gradient(#d9d9d9 0 17px, #fff 17px); display: flex; flex-direction: column; justify-content: space-between; align-items: center; padding: 4px 0; }
    .tray { display: flex; align-items: center; }
    .tray button { justify-content: center; height: 40px; }
    .two { text-align: center; line-height: 18px; }
    .status { gap: 8px; margin: 0 8px 0 32px; }
    .lang { padding: 0 4px; }
    .clock { width: 78px; }
    .cpu { width: 84px; }
    .links { width: 46px; }
    .wide { width: 42px; }
    .fold { width: 16px; }
    .centre { width: 36px; }
    .peek { border-left: 1px solid #4a565a; width: 5px; height: 40px; margin-left: 10px; }
  `];
  render() {
    return html`
      <button class="start" aria-label="开始">${ico("win", 16)}</button>
      <div class="search">${ico("ringO", 22)}<input type="text" aria-label="搜索" placeholder="在这里输入你要搜索的内容">${ico("mic", 17)}</div>
      <div class="apps"><button aria-label="任务视图">${ico("task", 17)}</button><button aria-label="浏览器">${ico("flower", 22)}</button><button aria-label="Internet Explorer">${ico("ie", 24)}</button>
        <button aria-label="助手">${ico("swirl", 22)}<span class="badge">${ico("goldBell", 14)}</span></button><button class="live" aria-label="广联达">${ico("app", 24)}</button></div>
      <div class="spin">${chevron(UP)}${chevron(DOWN)}</div>
      <div class="tray"><button class="links">链接</button><button class="wide" aria-label="人脉">${ico("people", 16)}</button><div class="two cpu">35%<br>CPU使用</div>
        <button class="fold" aria-label="展开">${ico("chevUp", 14)}</button></div>
      <div class="tray status"><button>${ico("notify", 16, "通知")}</button><button>${ico("battery", 16, "电池")}</button><button>${ico("wifi", 16, "网络")}</button><button>${ico("volume", 16, "音量")}</button>
        <button aria-label="键盘"><svg width="23" height="14" viewBox="0 0 23 14"><path d="M.5.5h22v12H.5z" fill="none" stroke="#fff"/><path d="M3 4h17M3 6.500h17" stroke="#fff" stroke-dasharray="1 1"/><path d="M6 9.500h11M3 9.500h1M19 9.500h1" stroke="#fff"/></svg></button>
        <button class="lang">中</button><button>${ico("sogou", 16, "搜狗")}</button></div>
      <div class="tray"><div class="two clock">15:26<br>2018/9/22</div><button class="centre" aria-label="操作中心">${ico("action", 18)}</button><span class="peek"></span></div>`;
  }
}

/* ---------- main window ---------- */
const MENUS = ["文件(F)", "编辑(E)", "楼层(L)", "构件(N)", "绘图(D)", "修改(M)", "钢筋量(Q)", "视图(V)", "工具(T)", "云应用(Y)", "BIM应用(I)", "在线服务(S)", "帮助(H)", "版本号(B)"];
const DRAW: Tool[] = [["paint", "绘图"], ["sigma", "汇总计算"], ["cloud", "云检查"], ["slab", "平齐板顶", "d"], ["bino", "查找图元", "d"], ["glasses", "查看钢筋量", "d"], ["batch", "批量选择", "d"]];
const VIEW: Tool[] = [["cube", "俯视", "dc"], ["orbit", "动态观察", "d"], ["part3d", "局部三维", "d"], ["", "|"], ["full", "全屏", "d"], ["zoom", "缩放", "dc"], ["pan", "平移", "dc"], ["rotate", "屏幕旋转", "dc"], ["", "|"], ["floor", "选择楼层", "d"]];

@customElement("app-root")
class AppRoot extends LitElement {
  static styles = [shared, css`
    :host { display: flex; flex-direction: column; height: 100vh; overflow: hidden; background: #f0f0f0; position: relative; }
    .title { display: flex; align-items: center; gap: 5px; height: 23px; padding: 0 16px 0 2px; background: #fff; color: #8c8c8c; white-space: nowrap; }
    .title .name { flex: 1; overflow: hidden; }
    .win { display: flex; gap: 34px; }
    .menu { display: flex; height: 31px; align-items: center; padding-left: 7px; white-space: nowrap; }
    .menus { display: flex; gap: 11px; margin-right: 8px; }
    .menu .nick { margin-left: 27px; margin-right: 7px; }
    .menu .band { height: 28px; }
    .menu .tip { width: 187px; justify-content: center; color: #5e3000; margin-right: 2px; }
    .menu .acct { flex: 1; padding: 0 4px; gap: 9px; }
    .more { margin-left: auto; align-self: flex-start; font: bold 14px/18px "Noto Sans", sans-serif; }
    .bar { display: flex; gap: 3px; height: 29px; }
    .bar .band { padding: 0 4px; }
    .bar .file { width: 150px; gap: 8px; padding-left: 5px; }
    .file .pair { display: flex; align-items: center; gap: 4px; }
    .bar .draw { width: 549px; }
    .bar .view { flex: 1; padding-left: 0; }
    .view .sep { margin: 0 -1px; }
    .two { border: 1px solid #666; background: #f6f6f6; height: 23px; padding: 0 4px 0 2px; width: 62px; margin-right: -3px; }
    .main { flex: 1; display: flex; min-height: 0; padding-top: 1px; gap: 6px; }
    .work { flex: 1; min-width: 0; display: flex; flex-direction: column; padding-right: 3px; }
    .work .band { height: 28px; padding: 0 4px; border-radius: 2px; }
    .work .tb .caret { margin-left: -2px; }
    .work .sep { margin: 0 -1px; }
    .lbl, .last { display: flex; align-items: center; gap: 3px; }
    .lbl .pick { width: 60px; margin-left: 3px; }
    .last { gap: 7px; }
    .panels { flex: 1; display: flex; gap: 4px; min-height: 0; }
    component-list { margin-top: 3px; }
    .status { display: grid; grid-template-columns: 148px 79px 98px 48px 1fr 71px; gap: 2px; height: 22px; padding-top: 1px; margin-top: 1px; flex: none; background: #f8f8f8; }
    .status div { border: 1px solid #d0d0d0; background: linear-gradient(#fdfdfd, #efefef); padding: 1px 0 0 1px; white-space: nowrap; overflow: hidden; }
    section-window { position: absolute; left: 455px; right: 22px; top: 132px; bottom: 65px; }
    .ime { position: absolute; left: 778px; top: 2px; height: 25px; display: flex; align-items: center; gap: 7px; background: #fff; border: 1px solid #b4c8dc; padding: 0 3px 0 17px; color: #1a73c8; }
    .ime .logo { position: absolute; left: -18px; top: -4px; }
    .ime b { font: 900 15px/16px "Noto Sans CJK SC", sans-serif; }
    .blob { position: absolute; left: 798px; top: 0; width: 48px; height: 3px; background: #3fc060; border-radius: 0 0 20px 20px; }
  `];
  render() {
    return html`
      <div class="title">${ico("app")}<span class="name">广联达BIM钢筋算量软件 GGJ2013 - [C:\\Users\\Administrator.PC-20141127NRHM\\Desktop\\白龙村-2016-08-25-13-27-07(2166版).GGJ12]</span>
        <div class="win"><button aria-label="最小化"><svg width="11" height="11"><path d="M0 5.500h11" stroke="#777"/></svg></button><button aria-label="还原"><svg width="11" height="11"><path d="M.5 2.500h8v8h-8zM2.500 2V.5h8v8H9" fill="none" stroke="#777"/></svg></button><button aria-label="关闭"><svg width="11" height="11"><path d="M.5.5l10 10M10.500.5l-10 10" stroke="#777"/></svg></button></div></div>
      <nav class="menu"><div class="menus">${MENUS.map((m) => html`<button>${m}</button>`)}</div>${tool(["change", "新建变更", "c"])}<span class="nick">广小二</span>
        <div class="band tip">后浇带会扣减梁、板、..</div>
        <div class="band acct">${tool(["user", "13907298339", "c"])}<span>造价豆:0</span>${ico("bell")}<span class="more">»</span></div></nav>
      <div class="bar">
        <div class="band file">${ico("fresh", 15, "新建")}<span class="pair">${ico("open", 17, "打开")}${caret()}</span>${ico("save", 15, "保存")}<span class="sep"></span><span class="pair">${ico("undo", 16, "撤销")}${caret()}</span><span class="more">»</span></div>
        <div class="band draw">${DRAW.map(tool)}<span class="more">»</span></div>
        <div class="band view"><button class="tb dim two">${ico("plane")}<span>二维</span>${caret()}</button>${VIEW.map(tool)}<span class="more">»</span></div>
      </div>
      <div class="main">
        <module-nav></module-nav>
        <div class="work">
          <div class="band">${tool(["create", "新建", "c"])}${tool(["cross", "删除"])}${tool(["copy", "复制"])}${tool(["rename", "重命名"])}
            <div class="lbl"><span class="sep"></span><label for="floor">楼层</label><span class="pick"><select id="floor"><option>基础层</option></select>${caret()}</span></div>
            ${tool(["", "|"])}${tool(["sort", "排序", "c"])}${tool(["filter", "过滤", "c"])}${tool(["", "|"])}${tool(["floors", "从其他楼层复制构件"])}${tool(["floors2", "复制构件到其他楼层"])}
            <div class="last">${tool(["", "|"])}${tool(["", "查找", "c"])}${tool(["", "|"])}${tool(["up", "上移"])}${tool(["down", "下移", "d"])}</div></div>
          <div class="panels"><component-list></component-list><property-editor></property-editor></div>
        </div>
      </div>
      <div class="status"><div></div><div>${mix("层高:2.15m")}</div><div>${mix("底标高:-2.2m")}</div><div>${mix("0")}</div><div>名称在当前层当前构件类型下不允许重名</div><div>${mix("431.2 FPS")}</div></div>
      <task-bar></task-bar>
      <section-window></section-window>
      <span class="blob"></span>
      <div class="ime"><span class="logo">${ico("sogou", 31)}</span><b>中</b><b>°,</b>${ico("smile")}${ico("mic2")}${ico("keys")}${ico("person")}${ico("shirt")}${ico("wrench")}</div>`;
  }
}
